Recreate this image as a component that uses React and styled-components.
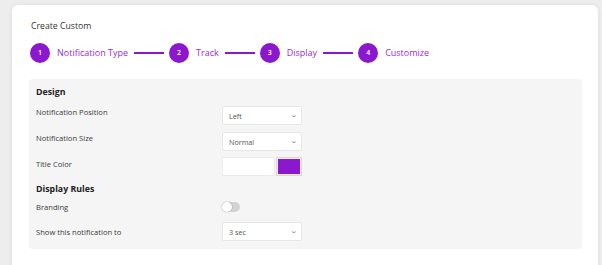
import React from 'react'
import styled, { createGlobalStyle } from 'styled-components'

const Global = createGlobalStyle`
	body {
		margin: 0;
		background: #ededed;
		font-family: "Open Sans", "Noto Sans", sans-serif;
	}
`

const Page = styled.div`
	width: 602px;
	height: 265px;
	overflow: hidden;
	padding: 5px 4px 0 12px;
	box-sizing: border-box;
`

const Card = styled.div`
	background: #fff;
	border-radius: 6px 6px 0 0;
	box-shadow: 0 0 4px rgba(0,0,0,.08);
	height: 290px;
	padding: 15px 16px 0 17px;
	box-sizing: border-box;
`

const Title = styled.div`
	font-size: 8.7px;
	color: #333;
	line-height: 12px;
	padding-left: 2px;
`

const Steps = styled.div`
	display: flex;
	align-items: center;
	margin-top: 10px;
	height: 21px;
	padding-left: 1px;
`

const Step = styled.div`
	display: flex;
	align-items: center;
	gap: 7px;
`

const Circle = styled.div`
	width: 20px;
	height: 20px;
	border-radius: 50%;
	background: #8b17cf;
	color: #fff;
	font-size: 7px;
	font-weight: 600;
	display: flex;
	align-items: center;
	justify-content: center;
`

const StepLabel = styled.span`
	font-size: 9px;
	color: #9a2bd8;
`

const Line = styled.div`
	width: 30px;
	height: 2px;
	background: #8b17cf;
	margin: 0 5px 0 6px;
`

const Panel = styled.div`
	margin-top: 16px;
	background: #f5f5f5;
	border-radius: 4px;
	padding: 7px 7px 5px 7px;
	width: 553px;
	box-sizing: border-box;
`

const Heading = styled.div`
	font-size: 8.8px;
	font-weight: 700;
	color: #222;
	line-height: 12px;
	margin-top: ${p => p.$mt || 0}px;
	margin-bottom: ${p => p.$mb || 0}px;
`

const Row = styled.div`
	display: grid;
	grid-template-columns: 186px 80px;
	align-items: ${p => p.$center ? 'center' : 'start'};
	height: ${p => p.$h || 26}px;
`

const Label = styled.div`
	font-size: 7.6px;
	line-height: 10px;
	color: #3a3a3a;
	margin-top: ${p => p.$center ? 0 : 4}px;
`

const Select = styled.div`
	height: 19px;
	margin-top: ${p => p.$center ? 0 : 3}px;
	background: #fff;
	border: 1px solid #e6e6e6;
	border-radius: 2px;
	box-sizing: border-box;
	display: flex;
	align-items: center;
	justify-content: space-between;
	padding: 0 4px 0 6px;
	font-size: 7.2px;
	color: #555;
`

const Caret = styled.span`
	font-size: 7px;
	color: #777;
	transform: scaleX(1.3) translateY(-1px);
`

const ColorPicker = styled.div`
	display: flex;
	gap: 1px;
	height: 19px;
	margin-top: 2px;
`

const ColorInput = styled.div`
	width: 53px;
	background: #fff;
	border: 1px solid #ececec;
	box-sizing: border-box;
`

const Swatch = styled.div`
	width: 26px;
	border: 1px solid #d8d8d8;
	box-sizing: border-box;
	padding: 1px;
	background: #f0f0f0;
	&::after {
		content: '';
		display: block;
		height: 100%;
		background: #8b17cf;
	}
`

const Toggle = styled.div`
	width: 18px;
	height: 10px;
	border-radius: 5px;
	background: #d3d3d3;
	position: relative;
	&::after {
		content: '';
		position: absolute;
		left: 0;
		top: 0;
		width: 10px;
		height: 10px;
		border-radius: 50%;
		background: #fff;
		box-shadow: 0 0 2px rgba(0,0,0,.3);
	}
`

const steps = ['Notification Type', 'Track', 'Display', 'Customize']

const SelectBox = ({ value, center }) => (
	<Select $center={center}>
		{value}
		<Caret>⌄</Caret>
	</Select>
)

export default function App() {
	return (
		<Page>
			<Global />
			<Card>
				<Title>Create Custom</Title>
				<Steps>
					{steps.map((s, i) => (
						<React.Fragment key={s}>
							<Step>
								<Circle>{i + 1}</Circle>
								<StepLabel>{s}</StepLabel>
							</Step>
							{i < steps.length - 1 && <Line />}
						</React.Fragment>
					))}
				</Steps>
				<Panel>
					<Heading $mb={5}>Design</Heading>
					<Row>
						<Label>Notification Position</Label>
						<SelectBox value="Left" />
					</Row>
					<Row>
						<Label>Notification Size</Label>
						<SelectBox value="Normal" />
					</Row>
					<Row>
						<Label>Title Color</Label>
						<ColorPicker>
							<ColorInput />
							<Swatch />
						</ColorPicker>
					</Row>
					<Heading $mt={2}>Display Rules</Heading>
					<Row $h={24} $center>
						<Label $center>Branding</Label>
						<Toggle />
					</Row>
					<Row $h={25} $center>
						<Label $center>Show this notification to</Label>
						<SelectBox value="3 sec" center />
					</Row>
				</Panel>
			</Card>
		</Page>
	)
}
